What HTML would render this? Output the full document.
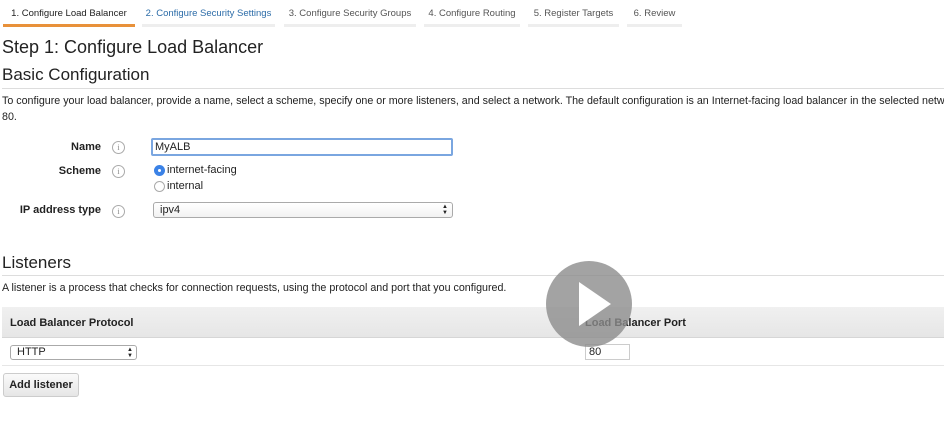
<!DOCTYPE html><html><head><style>
*{box-sizing:border-box}
body{margin:0;width:944px;height:427px;overflow:hidden;background:#fff;font-family:"Liberation Sans",sans-serif;color:#222;position:relative}
.a{position:absolute;white-space:nowrap}
.tab{position:absolute;top:0;height:27px;border-bottom:3px solid #eee;font-size:9.5px;color:#555;text-align:center;line-height:27px}
.lab{position:absolute;font-size:11px;font-weight:bold;text-align:right;width:101px;left:0}
.i{position:absolute;left:112px;width:13px;height:13px;border:1px solid #aaa;border-radius:50%;font-size:8px;color:#888;text-align:center;line-height:11px;font-family:"Liberation Serif",serif}
</style></head><body>
<div class="tab" style="left:3px;width:132px;border-color:#e8913a;color:#222">1. Configure Load Balancer</div>
<div class="tab" style="left:142px;width:133px;color:#2c6ca8">2. Configure Security Settings</div>
<div class="tab" style="left:284px;width:132px">3. Configure Security Groups</div>
<div class="tab" style="left:424px;width:96px">4. Configure Routing</div>
<div class="tab" style="left:528px;width:91px">5. Register Targets</div>
<div class="tab" style="left:627px;width:55px">6. Review</div>
<div class="a" style="left:2px;top:37px;font-size:18px">Step 1: Configure Load Balancer</div>
<div class="a" style="left:2px;top:65px;font-size:17px">Basic Configuration</div>
<div class="a" style="left:2px;top:88px;width:942px;border-top:1px solid #ddd"></div>
<div class="a" style="left:2px;top:93px;font-size:10.7px;line-height:16px">To configure your load balancer, provide a name, select a scheme, specify one or more listeners, and select a network. The default configuration is an Internet-facing load balancer in the selected network<br>80.</div>
<div class="lab" style="top:141px">Name</div><div class="i" style="top:141px">i</div>
<div class="a" style="left:151px;top:138px;width:302px;height:18px;border:2px solid #7aa6e0;border-radius:2px;font-size:11px;line-height:14px;padding-left:2px">MyALB</div>
<div class="lab" style="top:165px">Scheme</div><div class="i" style="top:165px">i</div>
<div class="a" style="left:154px;top:165px;width:11px;height:11px;border-radius:50%;background:#3b82e6"><div style="position:absolute;left:4px;top:4px;width:3px;height:3px;background:#fff;border-radius:50%"></div></div>
<div class="a" style="left:167px;top:164px;font-size:11px">internet-facing</div>
<div class="a" style="left:154px;top:181px;width:11px;height:11px;border:1px solid #aaa;border-radius:50%"></div>
<div class="a" style="left:167px;top:180px;font-size:11px">internal</div>
<div class="lab" style="top:204px">IP address type</div><div class="i" style="top:205px">i</div>
<div class="a" style="left:153px;top:202px;width:300px;height:16px;border:1px solid #aaa;border-radius:3px;font-size:11px;line-height:14px;padding-left:6px;background:linear-gradient(#fff,#f2f2f2)">ipv4<span style="position:absolute;right:4px;font-size:6px;line-height:6px;top:1px">▲<br>▼</span></div>
<div class="a" style="left:2px;top:253px;font-size:17px">Listeners</div>
<div class="a" style="left:2px;top:275px;width:942px;border-top:1px solid #ddd"></div>
<div class="a" style="left:2px;top:282px;font-size:10.7px">A listener is a process that checks for connection requests, using the protocol and port that you configured.</div>
<div class="a" style="left:2px;top:307px;width:942px;height:31px;background:linear-gradient(#f0f0f0,#e6e6e6);border-bottom:1px solid #d6d6d6"></div>
<div class="a" style="left:10px;top:317px;font-size:11px;font-weight:bold">Load Balancer Protocol</div>
<div class="a" style="left:585px;top:317px;font-size:11px;font-weight:bold">Load Balancer Port</div>
<div class="a" style="left:10px;top:345px;width:127px;height:15px;border:1px solid #aaa;border-radius:3px;font-size:11px;line-height:13px;padding-left:6px">HTTP<span style="position:absolute;right:3px;font-size:6px;line-height:6px;top:1px">▲<br>▼</span></div>
<div class="a" style="left:585px;top:344px;width:45px;height:16px;border:1px solid #ccc;font-size:11px;line-height:14px;padding-left:3px">80</div>
<div class="a" style="left:2px;top:365px;width:942px;border-top:1px solid #e6e6e6"></div>
<div class="a" style="left:3px;top:373px;width:76px;height:24px;border:1px solid #ccc;border-radius:3px;background:linear-gradient(#fafafa,#e6e6e6);font-size:11px;font-weight:bold;text-align:center;line-height:22px">Add listener</div>
<svg class="a" style="left:545px;top:260px" width="88" height="88"><circle cx="44" cy="44" r="43" fill="#8c8c8c" opacity=".8"/><path d="M34 22 L66 44 L34 66Z" fill="#fff"/></svg>
</body></html>
